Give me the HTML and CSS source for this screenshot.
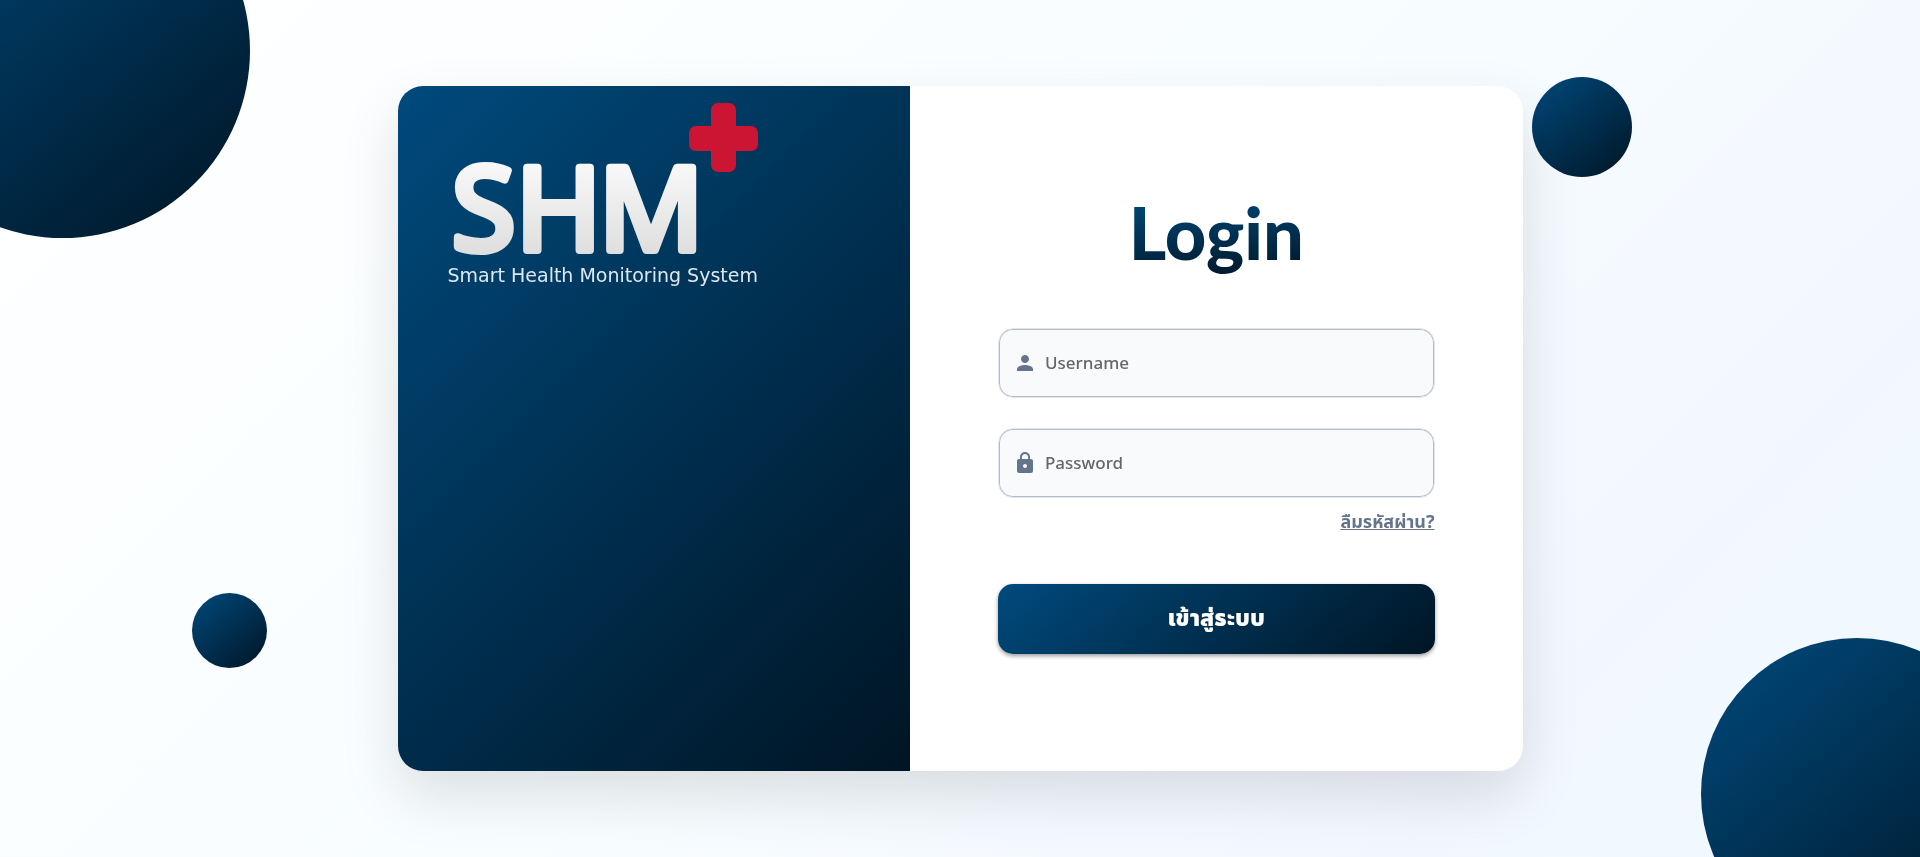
FILE: index.html
```html
<!DOCTYPE html>
<html lang="th">
<head>
<meta charset="utf-8">
<meta name="viewport" content="width=device-width, initial-scale=1">
<title>SHM Login</title>
<link rel="stylesheet" href="styles.css">
</head>
<body class="page">
<div class="backdrop">
  <div class="orb orb-top-left"></div>
  <div class="orb orb-top-right"></div>
  <div class="orb orb-bottom-left"></div>
  <div class="orb orb-bottom-right"></div>
</div>
<main class="card">
  <section class="brand">
    <svg class="logo" viewBox="0 0 320 156" role="img" aria-label="SHM">
      <defs>
        <linearGradient id="silver" gradientUnits="userSpaceOnUse" x1="0" y1="62" x2="0" y2="152">
          <stop offset="0" stop-color="#f8f8f8"/>
          <stop offset="1" stop-color="#dedede"/>
        </linearGradient>
      </defs>
      <text class="logo-text" x="4 68 151" y="147" fill="url(#silver)" stroke="url(#silver)">SHM</text>
      <rect x="263" y="0" width="25" height="69" rx="7" fill="#cc1533"/>
      <rect x="241" y="23" width="69" height="25" rx="7" fill="#cc1533"/>
    </svg>
    <p class="tagline">Smart Health Monitoring System</p>
  </section>
  <form class="login">
    <h1 class="title">Login</h1>
    <label class="field">
      <svg class="icon" viewBox="0 0 24 24" aria-hidden="true"><path d="M12 12c2.21 0 4-1.79 4-4s-1.79-4-4-4-4 1.790-4 4 1.790 4 4 4zm0 2c-2.670 0-8 1.340-8 4v2h16v-2c0-2.660-5.330-4-8-4z"/></svg>
      <input class="input" type="text" placeholder="Username" aria-label="Username">
    </label>
    <label class="field">
      <svg class="icon" viewBox="0 0 24 24" aria-hidden="true"><path d="M18 8h-1V6c0-2.760-2.240-5-5-5S7 3.240 7 6v2H6c-1.100 0-2 .9-2 2v10c0 1.100.9 2 2 2h12c1.100 0 2-.9 2-2V10c0-1.100-.9-2-2-2zm-6 9c-1.100 0-2-.9-2-2s.9-2 2-2 2 .9 2 2-.9 2-2 2zm3.100-9H8.900V6c0-1.710 1.390-3.100 3.100-3.100s3.100 1.390 3.100 3.100v2z"/></svg>
      <input class="input" type="password" placeholder="Password" aria-label="Password">
    </label>
    <a class="forgot" href="#">ลืมรหัสผ่าน?</a>
    <button class="submit" type="submit">เข้าสู่ระบบ</button>
  </form>
</main>
</body>
</html>
```
FILE: styles.css
```css
* {
  box-sizing: border-box;
}

.page {
  display: flex;
  align-items: center;
  justify-content: center;
  min-height: 100vh;
  margin: 0;
  font-family: "Noto Sans", "Noto Sans Thai", sans-serif;
  background: linear-gradient(135deg, #ffffff 0%, #f8fdff 50%, #f3f7ff 78%, #effaff 100%);
}

.backdrop {
  position: fixed;
  inset: 0;
  overflow: hidden;
}

.orb {
  position: absolute;
  border-radius: 50%;
  background: linear-gradient(140deg, #004a7d, #001524);
}

.orb-top-left {
  top: -137px;
  left: -125px;
  width: 375px;
  height: 375px;
}

.orb-top-right {
  top: 9%;
  right: 15%;
  width: 100px;
  height: 100px;
}

.orb-bottom-left {
  bottom: 22%;
  left: 10%;
  width: 75px;
  height: 75px;
}

.orb-bottom-right {
  right: -93px;
  bottom: -93px;
  width: 312px;
  height: 312px;
}

.card {
  position: relative;
  display: grid;
  grid-template-columns: 41fr 49fr;
  width: min(1125px, 92%);
  min-height: 80vh;
  border-radius: 25px;
  overflow: hidden;
  background: #ffffff;
  box-shadow: 0 25px 60px rgba(0, 0, 0, 0.12);
}

.brand {
  padding: 17px 50px;
  background: linear-gradient(135deg, #004a7d, #001524);
}

.logo {
  display: block;
  width: 320px;
  height: 156px;
  overflow: visible;
}

.logo-text {
  font-family: "Noto Sans", sans-serif;
  font-size: 115px;
  font-weight: 400;
  stroke-width: 8px;
  stroke-linejoin: round;
}

.tagline {
  margin: 4px 0 0;
  font-family: "DejaVu Sans", sans-serif;
  font-size: 19px;
  line-height: 24px;
  color: #dfe6ec;
  white-space: nowrap;
}

.login {
  display: flex;
  flex-direction: column;
  justify-content: center;
  padding: 0 88px 16px;
}

.title {
  align-self: center;
  margin: 8px 0 50px;
  padding-bottom: 10px;
  font-family: Lato, sans-serif;
  font-size: 72px;
  font-weight: 900;
  line-height: 72px;
  color: transparent;
  background: linear-gradient(175deg, #004a7d, #001524);
  background-clip: text;
}

.field {
  display: flex;
  align-items: center;
  gap: 8px;
  height: 70px;
  margin-bottom: 30px;
  padding: 0 14px;
  border: 1px solid #e0e6ee;
  border-radius: 15px;
  background: #f9fafc;
  box-shadow: inset 0 0 0 1px #b6bcc3;
}

.icon {
  flex: none;
  width: 24px;
  height: 24px;
  fill: #64748b;
}

.input {
  flex: 1;
  min-width: 0;
  padding: 0;
  border: 0;
  outline: 0;
  font: 500 17px "Noto Sans", sans-serif;
  color: #334155;
  background: transparent;
}

.input::placeholder {
  color: #666666;
}

.forgot {
  align-self: flex-end;
  margin: -20px 0 50px;
  font-size: 18px;
  font-weight: 700;
  line-height: 26px;
  color: #64748b;
}

.submit {
  height: 70px;
  border: 0;
  border-radius: 15px;
  font: 900 23px "Noto Sans", "Noto Sans Thai", sans-serif;
  color: #ffffff;
  background: linear-gradient(140deg, #004a7d, #001524);
  box-shadow: 0 2px 4px rgba(0, 0, 0, 0.4);
}
```
